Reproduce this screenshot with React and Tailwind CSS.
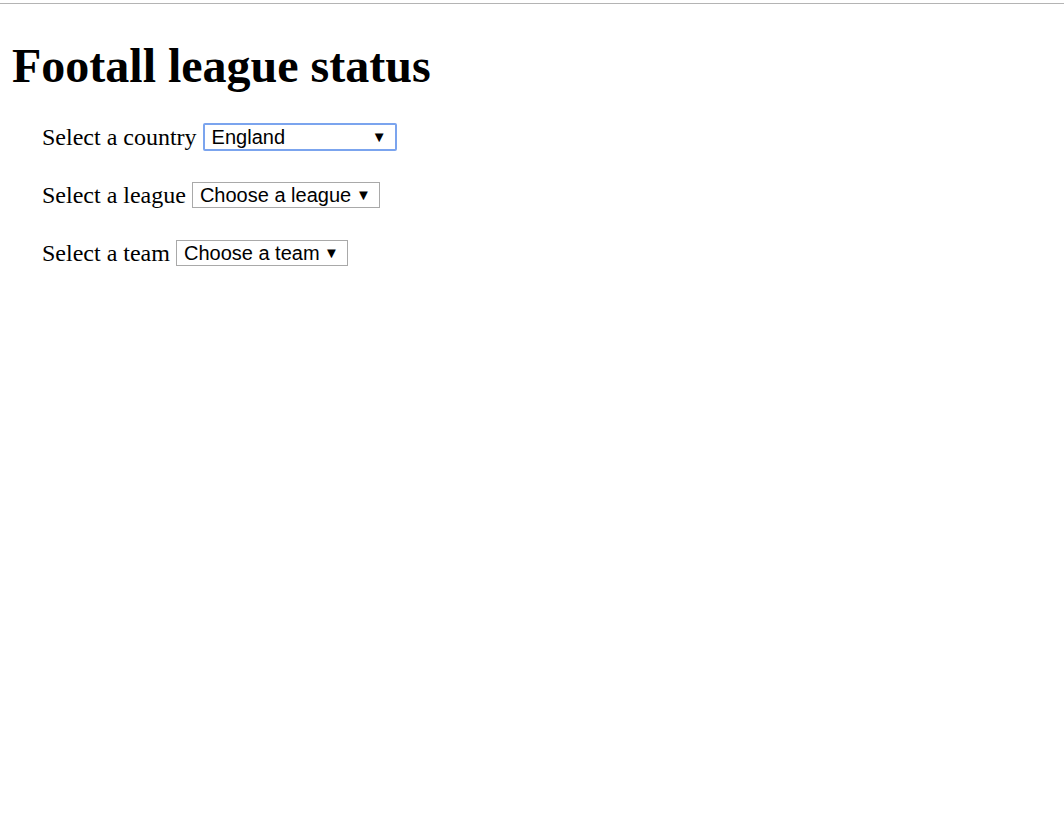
export default function App() {
  const Sel = ({ text, w, focus }) => (
    <div
      className={`inline-flex items-center justify-between h-[26px] pl-[7px] pr-[8px] text-[20px] leading-none text-black bg-white ${w} ${
        focus ? "border-2 border-[#7ba4ee] rounded-[2px]" : "border border-[#a9a9a9]"
      }`}
      style={{ fontFamily: '"Liberation Sans", Arial, sans-serif' }}
    >
      <span>{text}</span>
      <span className="text-[15px]">▼</span>
    </div>
  );
  return (
    <div className="min-h-[825px] bg-white" style={{ fontFamily: '"Liberation Serif", "Times New Roman", serif' }}>
      <div className="h-[3px]" />
      <div className="h-px bg-[#b4b4b4]" />
      <h1 className="text-[48px] font-bold leading-none pl-[12px] pt-[38px] text-black">Footall league status</h1>
      <div className="pl-[42px] pt-[33px] flex flex-col gap-[31px] text-[24px] text-black">
        <div className="flex items-center gap-[6px] h-[27px]">
          <span>Select a country</span>
          <Sel text="England" w="w-[194px] h-[28px]" focus />
        </div>
        <div className="flex items-center gap-[6px] h-[27px]">
          <span>Select a league</span>
          <Sel text="Choose a league" w="w-[188px]" />
        </div>
        <div className="flex items-center gap-[6px] h-[27px]">
          <span>Select a team</span>
          <Sel text="Choose a team" w="w-[172px]" />
        </div>
      </div>
    </div>
  );
}
